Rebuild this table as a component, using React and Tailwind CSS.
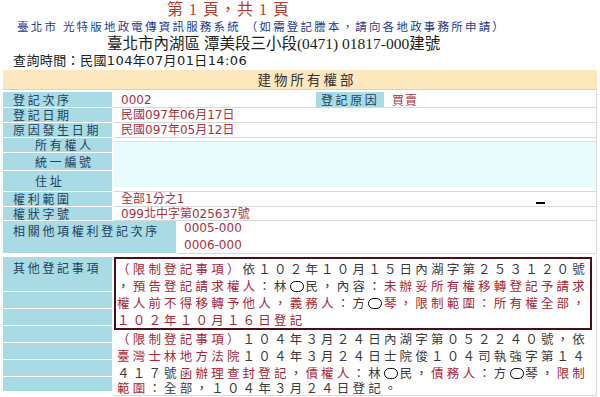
const CJK = { fontFamily: '"Noto Sans CJK TC", "Noto Sans CJK SC", sans-serif' };

const labelCls =
  'bg-[#a8dbe3] text-[#24405f] text-[12px] tracking-[2.7px] leading-none flex items-center pl-[10px] border-b border-white whitespace-nowrap';
const valueCls =
  'flex-1 flex items-center pl-[7px] text-[12px] leading-none text-[#a8323e] border-b border-r border-[#d9d9d9] whitespace-nowrap';
const numFont = { fontFamily: '"DejaVu Sans", "Noto Sans CJK TC", sans-serif' };

function Row({ label, h, children }) {
  return (
    <div className={`flex gap-[2px] ${h}`}>
      <div className={`${labelCls} w-[109px]`} style={CJK}>
        {label}
      </div>
      <div className={valueCls} style={numFont}>
        {children}
      </div>
    </div>
  );
}

// red / dark segments of the remark text
const R = ({ children }) => <span className="text-[#a8283a]">{children}</span>;
const D = ({ children }) => <span className="text-[#3b3b3b]">{children}</span>;
// the masked name character is drawn as a black outlined oval
const O = () => (
  <span className="inline-block align-middle w-[14px] h-[11px] mr-[1.7px] -mt-[2px] rounded-full border border-black" />
);

const lineCls = 'h-[17px] whitespace-nowrap text-[12.5px] tracking-[3.2px] leading-[17px]';

export default function App() {
  return (
    <div className="w-[600px] h-[397px] overflow-hidden bg-white" style={CJK}>
      {/* page counter */}
      <div
        className="h-[20px] flex items-center pl-[167px] text-[16px] tracking-[1px] text-[#b8402f]"
        style={{ fontFamily: '"Liberation Serif", "Noto Sans CJK TC", serif' }}
      >
        第 1 頁，共 1 頁
      </div>

      <div className="h-[14px] flex items-center pl-[17px] text-[11.5px] tracking-[2.2px] text-[#1f3b8f] whitespace-nowrap">
        臺北市 光特版地政電傳資訊服務系統 （如需登記謄本，請向各地政事務所申請）
      </div>

      <div
        className="h-[19px] flex items-center pl-[107px] text-[15.5px] text-[#222] whitespace-nowrap"
        style={{ fontFamily: '"Liberation Serif", "Noto Sans CJK TC", serif' }}
      >
        臺北市內湖區 潭美段三小段(0471) 01817-000建號
      </div>

      <div
        className="h-[15px] flex items-center pl-[13px] text-[13px] tracking-[0.4px] text-[#222] whitespace-nowrap"
        style={{ fontFamily: '"DejaVu Sans", "Noto Sans CJK TC", sans-serif' }}
      >
        查詢時間：民國104年07月01日14:06
      </div>

      <div className="mt-[2px] ml-[3px] w-[594px]">
        {/* section header */}
        <div className="h-[20px] bg-[#fce7bf] border-b border-[#efcf98] flex items-center justify-center pl-[14px] text-[13.5px] tracking-[3px] text-[#333]">
          建物所有權部
        </div>

        <div className="mt-[2px] flex flex-col">
          <Row label="登記次序" h="h-[16px]">
            <span className="w-[195px]">0002</span>
            <span
              className="h-full shrink-0 bg-[#a8dbe3] text-[#24405f] tracking-[2.6px] flex items-center pl-[5px] w-[68px] whitespace-nowrap overflow-hidden"
              style={CJK}
            >
              登記原因
            </span>
            <span className="pl-[8px] tracking-[1px]" style={CJK}>
              買賣
            </span>
          </Row>
          <Row label="登記日期" h="h-[15px]">
            民國097年06月17日
          </Row>
          <Row label="原因發生日期" h="h-[15px]">
            民國097年05月12日
          </Row>

          {/* owner block: three labels beside one cyan cell */}
          <div className="flex gap-[2px] h-[54px]">
            <div className="w-[109px] flex flex-col">
              <div className={`${labelCls} h-[15px] pl-[32px]`} style={CJK}>
                所有權人
              </div>
              <div className={`${labelCls} h-[18px] pl-[32px]`} style={CJK}>
                統一編號
              </div>
              <div className={`${labelCls} h-[21px] pl-[32px]`} style={CJK}>
                住址
              </div>
            </div>
            <div className="flex-1 flex flex-col border-r border-[#d9d9d9]">
              <div className="h-[4px] bg-white border-b border-[#e2e2e2]" />
              <div className="flex-1 bg-[#e9fcfd]" />
              <div className="h-[5px] bg-white border-b border-[#d9d9d9]" />
            </div>
          </div>

          <Row label="權利範圍" h="h-[15px]">
            <span className="flex-1">全部1分之1</span>
            <span className="w-[9px] h-[2px] bg-black mt-[7px] mr-[51px]" />
          </Row>
          <Row label="權狀字號" h="h-[14px]">
            099北中字第025637號
          </Row>

          <div className="flex gap-[2px] h-[33px]">
            <div className={`${labelCls} w-[173px] items-start pt-[4px]`} style={CJK}>
              相關他項權利登記次序
            </div>
            <div
              className="flex-1 flex flex-col justify-center pl-[6px] text-[12px] leading-[17px] text-[#a8323e] border-b border-r border-[#d9d9d9]"
              style={numFont}
            >
              <div>0005-000</div>
              <div>0006-000</div>
            </div>
          </div>

          {/* other registered matters */}
          <div className="mt-[3px] flex gap-[2px]">
            <div className="w-[109px] flex flex-col">
              <div className={`${labelCls} h-[35px] items-start pt-[5px]`} style={CJK}>
                其他登記事項
              </div>
              <div className="h-[17px] bg-[#a8dbe3] border-b border-white" />
              <div className="h-[17px] bg-[#a8dbe3] border-b border-white" />
              <div className="h-[17px] bg-[#a8dbe3] border-b border-white" />
              <div className="h-[17px] bg-[#a8dbe3] border-b border-white" />
              <div className="h-[17px] bg-[#a8dbe3] border-b border-white" />
              <div className="h-[14px] bg-[#a8dbe3]" />
            </div>
            <div className="flex-1 border-r border-b border-[#d9d9d9] pr-[4px]">
              <div className="border-2 border-[#4a0f18] pl-[1px] pt-[1px]">
                <div className={lineCls}>
                  <R>（限制登記事項）</R>
                  <D>依１０２年１０月１５日內湖字第２５３１２０號</D>
                </div>
                <div className={lineCls}>
                  <D>，</D>
                  <R>預告登記請求權人</R>
                  <D>：林</D>
                  <O />
                  <D>民，內容：</D>
                  <R>未辦妥所有權移轉登記予請求</R>
                </div>
                <div className={lineCls}>
                  <R>權人前不得移轉予他人，義務人</R>
                  <D>：方</D>
                  <O />
                  <R>琴，限制範圍：所有權全部，</R>
                </div>
                <div className={lineCls}>
                  <R>１０２年１０月１６日登記</R>
                </div>
              </div>
              <div className="pl-[3px]">
                <div className={lineCls}>
                  <R>（限制登記事項）</R>
                  <D>１０４年３月２４日內湖字第０５２２４０號，依</D>
                </div>
                <div className={lineCls}>
                  <R>臺灣士林地方法院</R>
                  <D>１０４年３月２４日士院俊１０４司執強字第１４</D>
                </div>
                <div className={lineCls}>
                  <D>４１７號</D>
                  <R>函辦理查封登記</R>
                  <D>，</D>
                  <R>債權人</R>
                  <D>：林</D>
                  <O />
                  <D>民，</D>
                  <R>債務人</R>
                  <D>：方</D>
                  <O />
                  <D>琴，</D>
                  <R>限制</R>
                </div>
                <div className="h-[14px] whitespace-nowrap text-[12.5px] tracking-[3.2px] leading-[14px]">
                  <R>範圍</R>
                  <D>：全部，１０４年３月２４日登記。</D>
                </div>
              </div>
            </div>
          </div>
        </div>
      </div>
    </div>
  );
}
